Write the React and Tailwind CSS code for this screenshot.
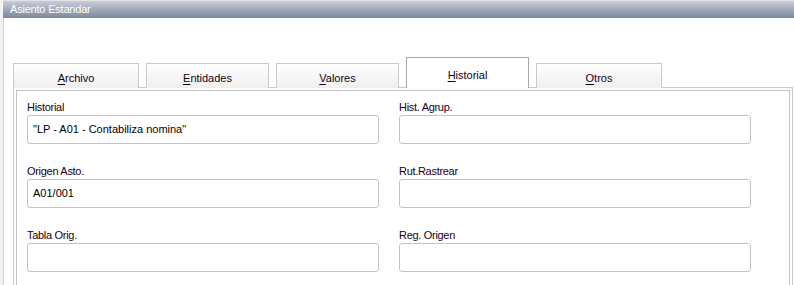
import React from "react";

const font = { fontFamily: '"Liberation Sans", Arial, sans-serif' };

function Tab({ first, rest, active, w }) {
  return (
    <div
      className={
        "flex items-center justify-center border border-b-0 text-[11px] text-[#140014] " +
        w +
        (active
          ? " h-[31px] bg-white border-[#a8a8a8] pt-[5px]"
          : " h-[25px] bg-gradient-to-b from-white to-[#efefef] border-[#c9c9c9] pt-[6px]")
      }
    >
      <span>
        <span className="underline underline-offset-2">{first}</span>
        {rest}
      </span>
    </div>
  );
}

function Field({ label, value }) {
  return (
    <div className="flex flex-col mb-[20px]">
      <div className="h-[14px] mb-[1px] text-[11px] leading-[14px] tracking-[-0.3px] text-[#1a001a]">
        {label}
      </div>
      <div className="h-[29px] border border-[#c3c3c3] rounded-[3px] bg-white flex items-center px-[5px] text-[11px] text-black">
        {value}
      </div>
    </div>
  );
}

export default function App() {
  return (
    <div
      className="w-[794px] h-[285px] overflow-hidden bg-[#f3f3f3] pl-[3px] flex"
      style={font}
    >
      <div className="flex-1 flex flex-col bg-white">
        <div className="h-[20px] bg-gradient-to-b from-[#c9cdd5] to-[#7b889e] border-t border-[#e0e3e8] pl-[7px] flex items-center text-[11px] tracking-[-0.2px] text-white">
          Asiento Estandar
        </div>
        <div className="flex-1 border-l border-[#d2d2d2] pl-[9px] pt-[40px] flex flex-col">
          <div className="flex items-end gap-[7px] h-[30px] relative z-10">
            <Tab first="A" rest="rchivo" w="w-[126px]" />
            <Tab first="E" rest="ntidades" w="w-[123px]" />
            <Tab first="V" rest="alores" w="w-[123px]" />
            <Tab first="H" rest="istorial" w="w-[123px]" active />
            <Tab first="O" rest="tros" w="w-[126px]" />
          </div>
          <div className="flex-1 border border-b-0 border-[#cacaca] pt-[2px] pl-[2px] pr-[2px] mr-[1px] -mt-[1px]">
            <div className="h-full border border-b-0 border-[#c4c4c4] pt-[9px] pl-[10px]">
              <div className="grid grid-cols-[352px_352px] gap-x-[20px]">
                <Field label="Historial" value={'"LP - A01 - Contabiliza nomina"'} />
                <Field label="Hist. Agrup." value="" />
                <Field label="Origen Asto." value="A01/001" />
                <Field label="Rut.Rastrear" value="" />
                <Field label="Tabla Orig." value="" />
                <Field label="Reg. Origen" value="" />
              </div>
            </div>
          </div>
        </div>
      </div>
    </div>
  );
}
